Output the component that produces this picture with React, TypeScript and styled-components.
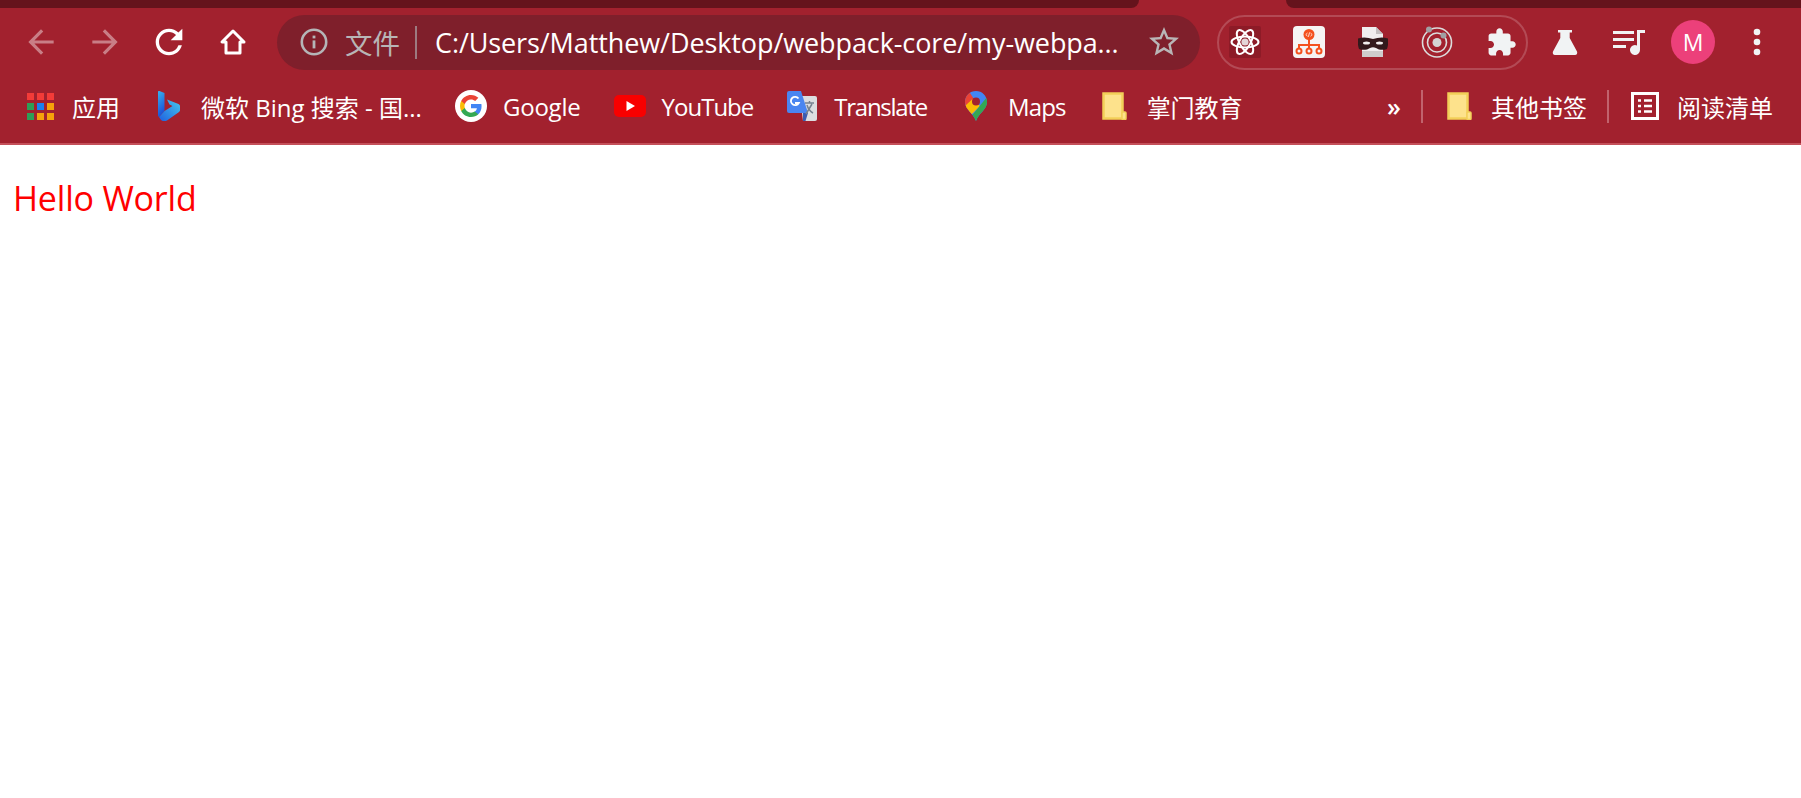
import React from "react";
import styled, { createGlobalStyle } from "styled-components";

const UI_FONT = `"Open Sans", "Noto Sans", "Noto Sans CJK SC", sans-serif`;

const bookmarks = [
  { id: "apps", icon: <AppsIcon />, title: "应用", tight: 0 },
  { id: "bing", icon: <BingIcon />, title: "微软 Bing 搜索 - 国...", tight: 0 },
  { id: "google", icon: <GoogleIcon />, title: "Google", tight: 0.2 },
  { id: "youtube", icon: <YoutubeIcon />, title: "YouTube", tight: 1 },
  { id: "translate", icon: <TranslateIcon />, title: "Translate", tight: 1.25 },
  { id: "maps", icon: <MapsIcon />, title: "Maps", tight: 0.85 },
  { id: "folder", icon: <FolderIcon />, title: "掌门教育", tight: 0 },
];

export default function App() {
  return (
    <>
      <GlobalStyle />
      <Chrome>
        <TabStrip>
          <LeftTab />
          <RightTab />
        </TabStrip>
        <Toolbar>
          <ToolButton $dim>
            <BackIcon />
          </ToolButton>
          <ToolButton $dim>
            <ForwardIcon />
          </ToolButton>
          <ToolButton>
            <ReloadIcon />
          </ToolButton>
          <ToolButton>
            <HomeIcon />
          </ToolButton>
          <Omnibox>
            <InfoIcon />
            <SecurityLabel>文件</SecurityLabel>
            <OmniDivider />
            <UrlText>C:/Users/Matthew/Desktop/webpack-core/my-webpa...</UrlText>
            <StarIcon />
          </Omnibox>
          <ExtensionPill>
            <ExtensionSlot>
              <ReactExtIcon />
            </ExtensionSlot>
            <ExtensionSlot>
              <OrgExtIcon />
            </ExtensionSlot>
            <ExtensionSlot>
              <MaskExtIcon />
            </ExtensionSlot>
            <ExtensionSlot>
              <TargetExtIcon />
            </ExtensionSlot>
            <ExtensionSlot>
              <PuzzleIcon />
            </ExtensionSlot>
          </ExtensionPill>
          <ToolButton>
            <FlaskIcon />
          </ToolButton>
          <ToolButton>
            <QueueIcon />
          </ToolButton>
          <ToolButton>
            <Avatar>M</Avatar>
          </ToolButton>
          <ToolButton>
            <MenuIcon />
          </ToolButton>
        </Toolbar>
        <BookmarkBar>
          {bookmarks.map((item) => (
            <Bookmark key={item.id}>
              <BookmarkIcon>{item.icon}</BookmarkIcon>
              <BookmarkLabel $tight={item.tight}>{item.title}</BookmarkLabel>
            </Bookmark>
          ))}
          <Overflow>»</Overflow>
          <BarDivider />
          <Bookmark>
            <BookmarkIcon>
              <FolderIcon />
            </BookmarkIcon>
            <BookmarkLabel>其他书签</BookmarkLabel>
          </Bookmark>
          <BarDivider />
          <Bookmark>
            <BookmarkIcon>
              <ReadingListIcon />
            </BookmarkIcon>
            <BookmarkLabel>阅读清单</BookmarkLabel>
          </Bookmark>
        </BookmarkBar>
      </Chrome>
      <PageBody>
        <Hello>Hello World</Hello>
      </PageBody>
    </>
  );
}

/**
 *
 * Icons
 *
 */

function BackIcon() {
  return (
    <Glyph viewBox="0 0 24 24" $size={38}>
      <path d="M20 11H7.830l5.590-5.590L12 4l-8 8 8 8 1.410-1.410L7.830 13H20v-2z" />
    </Glyph>
  );
}

function ForwardIcon() {
  return (
    <Glyph viewBox="0 0 24 24" $size={38}>
      <path d="M4 11h12.170l-5.590-5.590L12 4l8 8-8 8-1.410-1.410L16.170 13H4v-2z" />
    </Glyph>
  );
}

function ReloadIcon() {
  return (
    <Glyph viewBox="0 0 24 24" $size={40}>
      <path d="M17.650 6.350A7.958 7.958 0 0 0 12 4c-4.420 0-7.990 3.580-7.990 8s3.570 8 7.990 8c3.730 0 6.840-2.550 7.730-6h-2.080A5.990 5.990 0 0 1 12 18c-3.310 0-6-2.690-6-6s2.690-6 6-6c1.660 0 3.140.69 4.220 1.780L13 11h7V4l-2.350 2.350z" />
    </Glyph>
  );
}

function HomeIcon() {
  return (
    <svg width="30" height="30" viewBox="0 0 30 30">
      <path
        d="M15 4 4 15h4v11h14V15h4z"
        fill="none"
        stroke="#fff"
        strokeWidth="3"
        strokeLinejoin="round"
      />
    </svg>
  );
}

function InfoIcon() {
  return (
    <svg width="30" height="30" viewBox="0 0 30 30">
      <circle cx="15" cy="15" r="12.200" fill="none" stroke="#b5b5b7" strokeWidth="2.600" />
      <rect x="13.600" y="13.400" width="2.800" height="8" fill="#b5b5b7" />
      <rect x="13.600" y="8.600" width="2.800" height="2.800" fill="#b5b5b7" />
    </svg>
  );
}

function StarIcon() {
  return (
    <StarGlyph viewBox="0 0 24 24">
      <path d="M22 9.240l-7.190-.62L12 2 9.190 8.630 2 9.240l5.460 4.730L5.820 21 12 17.270 18.180 21l-1.630-7.030L22 9.240zM12 15.400l-3.760 2.270 1-4.280-3.320-2.880 4.380-.38L12 6.100l1.710 4.040 4.380.38-3.320 2.880 1 4.280L12 15.400z" />
    </StarGlyph>
  );
}

function ReactExtIcon() {
  return (
    <svg width="32" height="32" viewBox="0 0 32 32">
      <rect width="32" height="32" rx="2" fill="#8d1b27" />
      <g fill="none" stroke="#fff" strokeWidth="2">
        <ellipse cx="16" cy="16" rx="13.500" ry="5.400" />
        <ellipse cx="16" cy="16" rx="13.500" ry="5.400" transform="rotate(60 16 16)" />
        <ellipse cx="16" cy="16" rx="13.500" ry="5.400" transform="rotate(120 16 16)" />
      </g>
      <circle cx="16" cy="16" r="3.600" fill="#e4d5d7" />
    </svg>
  );
}

function OrgExtIcon() {
  return (
    <svg width="32" height="32" viewBox="0 0 32 32">
      <rect width="32" height="32" rx="4" fill="#f6f4f4" />
      <circle cx="16" cy="8.500" r="5.500" fill="#f4511e" />
      <path d="M14.500 7 12.800 8.600l1.700 1.600M17.500 7l1.700 1.600-1.700 1.600M16.600 6.400l-1.200 4.400" fill="none" stroke="#fff" strokeWidth=".8" />
      <path d="M16 13v9M6 22v-3h20v3" fill="none" stroke="#f4511e" strokeWidth="2" />
      <g fill="none" stroke="#f4511e" strokeWidth="2">
        <circle cx="6" cy="25" r="2.500" />
        <circle cx="16" cy="25" r="2.500" />
        <circle cx="26" cy="25" r="2.500" />
      </g>
    </svg>
  );
}

function MaskExtIcon() {
  return (
    <svg width="30" height="30" viewBox="0 0 30 30">
      <path d="M4 0h14l7 7v23H4z" fill="#f0eeef" />
      <path d="M18 0v7h7z" fill="#c4c0c1" />
      <path d="M4 24h21v6H4z" fill="#cfcdcd" />
      <path d="M0 11.500C5 10 10 10.500 15 12c5-1.500 10-2 15-.5.500 4 0 8-1 10.500-4 1.500-8 1-11-1-2-1-4-1-6 0-3 2-7 2.500-11 1-1-2.500-1.500-6.500-1-10.500z" fill="#33191c" />
      <ellipse cx="8.500" cy="16" rx="3.500" ry="1.500" fill="#f2eeee" />
      <ellipse cx="21.500" cy="16" rx="3.500" ry="1.500" fill="#f2eeee" />
    </svg>
  );
}

function TargetExtIcon() {
  return (
    <svg width="32" height="32" viewBox="0 0 32 32">
      <circle cx="16" cy="16.500" r="14.500" fill="none" stroke="#dcdcdc" strokeWidth="1.600" />
      <circle cx="16" cy="16.500" r="9.500" fill="none" stroke="#dcdcdc" strokeWidth="1.600" />
      <circle cx="16" cy="16.500" r="4.500" fill="#d4d4d4" />
      <circle cx="8" cy="3.500" r="3" fill="#a0a0a3" />
      <circle cx="22.500" cy="9.500" r="3" fill="#a0a0a3" />
    </svg>
  );
}

function PuzzleIcon() {
  return (
    <Glyph viewBox="0 0 24 24" $size={31} $fill="#f1f3f4">
      <path d="M20.500 11H19V7c0-1.100-.9-2-2-2h-4V3.500C13 2.120 11.880 1 10.500 1S8 2.120 8 3.500V5H4c-1.100 0-1.990.9-1.990 2v3.800H3.500c1.490 0 2.700 1.210 2.700 2.700s-1.210 2.700-2.700 2.700H2V20c0 1.100.9 2 2 2h3.800v-1.500c0-1.490 1.210-2.700 2.700-2.700 1.490 0 2.700 1.210 2.700 2.700V22H17c1.100 0 2-.9 2-2v-4h1.500c1.380 0 2.500-1.120 2.500-2.500S21.880 11 20.500 11z" />
    </Glyph>
  );
}

function FlaskIcon() {
  return (
    <svg width="26" height="25" viewBox="0 0 26 25">
      <path
        d="M6 0h14v2.500h-2.300V8L25 21.500c.7 1.700-.2 3.500-2 3.500H3c-1.800 0-2.700-1.800-2-3.500L8.300 8V2.500H6z"
        fill="#f1f3f4"
      />
    </svg>
  );
}

function QueueIcon() {
  return (
    <svg width="32" height="26" viewBox="0 0 32 26">
      <path
        d="M0 2h21v3H0zM0 9h21v3H0zM0 16h13v3H0zM24 1h8v3h-5v17a5 5 0 1 1-3-4.600z"
        fill="#f1f3f4"
      />
    </svg>
  );
}

function MenuIcon() {
  return (
    <svg width="8" height="28" viewBox="0 0 8 28">
      <circle cx="4" cy="4" r="3.300" fill="#f1f3f4" />
      <circle cx="4" cy="14" r="3.300" fill="#f1f3f4" />
      <circle cx="4" cy="24" r="3.300" fill="#f1f3f4" />
    </svg>
  );
}

function AppsIcon() {
  const colors = ["#f33b38", "#f33b38", "#f33b38", "#2f9e57", "#1a80f0", "#f6a10a", "#2f9e57", "#f6a10a", "#f6a10a"];
  return (
    <svg width="27" height="27" viewBox="0 0 27 27">
      {colors.map((fill, i) => (
        <rect key={i} x={(i % 3) * 10} y={Math.floor(i / 3) * 10} width="7" height="7" fill={fill} />
      ))}
    </svg>
  );
}

function BingIcon() {
  return (
    <svg width="22" height="30" viewBox="0 0 22 30">
      <defs>
        <linearGradient id="bing-a" x1="0" y1="0" x2="0.300" y2="1">
          <stop offset="0" stopColor="#36b4ee" />
          <stop offset="1" stopColor="#1b4fd8" />
        </linearGradient>
        <linearGradient id="bing-b" x1="0" y1="1" x2="1" y2="0">
          <stop offset="0" stopColor="#1f5fe0" />
          <stop offset="1" stopColor="#45c8ee" />
        </linearGradient>
      </defs>
      <path d="M0 1c0-1 .8-1.300 1.500-1L6.500 2V20L1 26C.4 25.500 0 25 0 24z" fill="url(#bing-a)" />
      <path d="M9 8.500 20.500 13c1 .4 1.500 1.300 1.500 2.300V19c0 1-.5 1.700-1.300 2.200L9 29.500c-2 1-4.500 1-6-.5L1 26l5.500-6 8-5-3-1.500z" fill="url(#bing-b)" />
    </svg>
  );
}

function GoogleIcon() {
  return (
    <svg width="32" height="32" viewBox="0 0 32 32">
      <circle cx="16" cy="16" r="16" fill="#fff" />
      <g transform="translate(4 4) scale(.5)">
        <path fill="#4285F4" d="M45.120 24.500c0-1.560-.14-3.060-.4-4.500H24v8.510h11.840c-.51 2.750-2.060 5.080-4.390 6.640v5.520h7.110c4.160-3.830 6.560-9.470 6.560-16.170z" />
        <path fill="#34A853" d="M24 46c5.940 0 10.920-1.970 14.560-5.330l-7.110-5.520c-1.970 1.320-4.490 2.100-7.450 2.100-5.730 0-10.580-3.870-12.310-9.070H4.340v5.700C7.960 41.070 15.400 46 24 46z" />
        <path fill="#FBBC05" d="M11.690 28.180c-.44-1.320-.69-2.730-.69-4.180s.25-2.860.69-4.180v-5.700H4.340C2.850 17.090 2 20.450 2 24s.85 6.910 2.340 9.880l7.350-5.700z" />
        <path fill="#EA4335" d="M24 10.750c3.230 0 6.130 1.110 8.410 3.290l6.310-6.310C34.910 4.180 29.930 2 24 2 15.400 2 7.960 6.930 4.340 14.120l7.350 5.700c1.730-5.200 6.580-9.070 12.310-9.070z" />
      </g>
    </svg>
  );
}

function YoutubeIcon() {
  return (
    <svg width="32" height="22" viewBox="0 0 32 22">
      <rect width="32" height="22" rx="5" fill="#f80000" />
      <path d="M12.500 6l8.500 5-8.500 5z" fill="#fff" />
    </svg>
  );
}

function TranslateIcon() {
  return (
    <svg width="30" height="30" viewBox="0 0 30 30">
      <path d="M13 5h15a2 2 0 0 1 2 2v21a2 2 0 0 1-2 2H16z" fill="#dcdde0" />
      <path d="M2 0h12l7 22H2a2 2 0 0 1-2-2V2a2 2 0 0 1 2-2z" fill="#4a85f0" />
      <path d="M16 22h5l-2.500 8H16z" fill="#3b5bb0" />
      <path d="M18 12h9M22.500 10v2M19 23l6-10M20 14c1 3.500 3 6.500 6 8" fill="none" stroke="#75808f" strokeWidth="1.500" />
      <path d="M11.500 7.500a4.200 4.200 0 1 0 .3 4.500H8" fill="none" stroke="#fff" strokeWidth="1.800" />
    </svg>
  );
}

function MapsIcon() {
  return (
    <svg width="22" height="30" viewBox="0 0 22 30">
      <clipPath id="maps-pin">
        <path d="M11 0C4.900 0 0 4.900 0 11c0 7.500 7.800 10.500 11 19 3.200-8.500 11-11.500 11-19C22 4.900 17.100 0 11 0z" />
      </clipPath>
      <g clipPath="url(#maps-pin)">
        <rect width="22" height="30" fill="#4285f4" />
        <path d="M0 2h5l6 9-9 9-2-2z" fill="#ea4335" />
        <path d="M0 15 7.500 8 15 15 4 26 0 22z" fill="#fbbc04" />
        <path d="M22 6 5 27l2 3h15z" fill="#34a853" />
      </g>
      <circle cx="11" cy="10.500" r="4" fill="#a2212e" />
    </svg>
  );
}

function FolderIcon() {
  return (
    <svg width="25" height="28" viewBox="0 0 25 28">
      <path d="M1.500 1.500h19v25h-19z" fill="#fde28c" stroke="#f2cf58" strokeWidth="2.500" />
      <rect x="20" y="20" width="4" height="7.500" rx="1" fill="#fde28c" stroke="#f2cf58" strokeWidth="1.500" />
    </svg>
  );
}

function ReadingListIcon() {
  return (
    <svg width="28" height="28" viewBox="0 0 28 28">
      <rect x="1.500" y="1.500" width="25" height="25" fill="none" stroke="#fff" strokeWidth="3" />
      <path d="M7 8.500h3M13 8.500h8M7 14h3M13 14h8M7 19.500h3M13 19.500h8" stroke="#fff" strokeWidth="2.500" />
    </svg>
  );
}

/**
 *
 * Styles
 *
 */

const GlobalStyle = createGlobalStyle`
  html, body {
    margin: 0;
    background: #fff;
    font-family: ${UI_FONT};
  }
`;

const Chrome = styled.header`
  background: #a2212e;
  border-bottom: 2px solid #c4505a;
  height: 145px;
  box-sizing: border-box;
`;

const TabStrip = styled.div`
  display: flex;
  justify-content: space-between;
  height: 8px;
`;

const LeftTab = styled.div`
  width: 1139px;
  background: #65131c;
  border-radius: 0 0 14px 0;
`;

const RightTab = styled.div`
  width: 515px;
  background: #65131c;
  border-radius: 0 0 0 14px;
`;

const Toolbar = styled.div`
  display: flex;
  align-items: center;
  height: 68px;
  padding: 0 0 0 9px;
`;

const ToolButton = styled.div<{ $dim?: boolean }>`
  width: 64px;
  height: 55px;
  flex: none;
  display: flex;
  align-items: center;
  justify-content: center;
  opacity: ${({ $dim }) => ($dim ? 0.42 : 1)};
`;

const Glyph = styled.svg<{ $size: number; $fill?: string }>`
  width: ${({ $size }) => $size}px;
  height: ${({ $size }) => $size}px;
  flex: none;
  fill: ${({ $fill }) => $fill || "#fff"};
`;

const StarGlyph = styled.svg`
  width: 36px;
  height: 36px;
  flex: none;
  fill: #b9b5b6;
`;

const Omnibox = styled.div`
  display: flex;
  align-items: center;
  flex: none;
  box-sizing: border-box;
  width: 923px;
  height: 55px;
  margin-left: 12px;
  padding: 0 18px 0 22px;
  background: #7f1f2b;
  border-radius: 28px;
`;

const SecurityLabel = styled.span`
  margin-left: 16px;
  color: #b8b5b6;
  font-size: 27.500px;
  white-space: nowrap;
`;

const OmniDivider = styled.span`
  width: 2px;
  height: 33px;
  margin: 0 18px 0 15px;
  background: #9d7a80;
`;

const UrlText = styled.span`
  flex: 1;
  color: #fff;
  font-size: 27px;
  letter-spacing: -0.1px;
  white-space: nowrap;
`;

const ExtensionPill = styled.div`
  display: flex;
  align-items: center;
  gap: 16px;
  flex: none;
  box-sizing: border-box;
  width: 311px;
  height: 55px;
  margin: 0 5px 0 17px;
  padding: 0 0 0 2px;
  border: 2px solid #b34a55;
  border-radius: 28px;
`;

const ExtensionSlot = styled.div`
  width: 48px;
  flex: none;
  display: flex;
  justify-content: center;
`;

const Avatar = styled.div`
  width: 44px;
  height: 44px;
  border-radius: 50%;
  background: #ec407a;
  color: #fff;
  font-size: 23px;
  display: flex;
  align-items: center;
  justify-content: center;
`;

const BookmarkBar = styled.nav`
  display: flex;
  align-items: center;
  height: 60px;
  padding: 0 28px 0 23px;
  gap: 32px;
`;

const Bookmark = styled.div`
  display: flex;
  align-items: center;
  gap: 15px;
  flex: none;
`;

const BookmarkIcon = styled.span`
  width: 34px;
  flex: none;
  display: flex;
  justify-content: center;
`;

const BookmarkLabel = styled.span<{ $tight?: number }>`
  color: #fff;
  font-size: 24px;
  letter-spacing: ${({ $tight }) => -($tight || 0)}px;
  white-space: nowrap;
`;

const Overflow = styled.span`
  margin-left: auto;
  color: #fff;
  font-size: 25px;
  font-weight: 600;
`;

const BarDivider = styled.span`
  width: 2px;
  height: 33px;
  margin: 0 -13px 0 -12px;
  background: #c1636d;
`;

const PageBody = styled.main`
  padding: 30px 13px;
`;

const Hello = styled.div`
  color: #f00;
  font-size: 34px;
  letter-spacing: -0.2px;
`;
